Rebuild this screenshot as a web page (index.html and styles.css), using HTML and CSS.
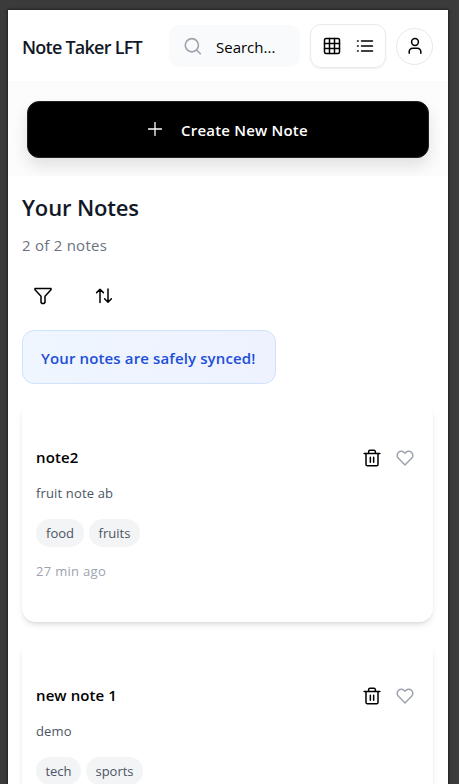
FILE: index.html
```html
<!DOCTYPE html>
<html lang="en">
<head>
<meta charset="utf-8">
<title>Note Taker LFT</title>
<link rel="stylesheet" href="styles.css">
</head>
<body>
<svg class="defs" aria-hidden="true">
  <symbol id="trash" viewBox="0 0 24 24"><path d="M1.5 6h21M4 6v14.5a1.8 1.8 0 0 0 1.8 1.8h12.4a1.8 1.8 0 0 0 1.8-1.8V6M7.5 6V3.6a1.8 1.8 0 0 1 1.8-1.8h5.4a1.8 1.8 0 0 1 1.8 1.8V6M9.8 11v6.5M14.2 11v6.5"/></symbol>
  <symbol id="heart" viewBox="0 0 24 24"><path d="M20.84 4.61a5.5 5.5 0 0 0-7.78 0L12 5.67l-1.06-1.06a5.5 5.5 0 0 0-7.78 7.78l1.06 1.06L12 21.23l7.78-7.78 1.06-1.06a5.5 5.5 0 0 0 0-7.78z"/></symbol>
</svg>
<div class="app">
  <header class="header">
    <h1 class="brand"><span>Note Taker LFT</span></h1>
    <div class="search">
      <svg class="icon" viewBox="0 0 24 24"><circle cx="10.5" cy="11" r="8.8"/><path d="M21.8 22.3l-5-5"/></svg>
      <span>Search...</span>
    </div>
    <div class="views">
      <svg class="icon" viewBox="0 0 18 18"><rect x="1.5" y="1.5" width="15" height="15" rx="1.5"/><path d="M6.5 1.5v15M11.5 1.5v15M1.5 6.5h15M1.5 11.5h15"/></svg>
      <svg class="icon" viewBox="0 0 18 18"><path d="M5.5 4h11M5.5 9h11M5.5 14h11M1.5 4h.7M1.5 9h.7M1.5 14h.7"/></svg>
    </div>
    <div class="avatar">
      <svg class="icon" viewBox="0 0 18 18"><circle cx="9" cy="5" r="3.4"/><path d="M3.2 16.3v-1.6a3.4 3.4 0 0 1 3.4-3.4h4.8a3.4 3.4 0 0 1 3.4 3.4v1.6"/></svg>
    </div>
  </header>
  <section class="create">
    <button class="create-button">
      <svg class="icon" viewBox="0 0 14 14"><path d="M7 .5v13M.5 7h13"/></svg>
      <span>Create New Note</span>
    </button>
  </section>
  <main class="main">
    <h2 class="title"><span>Your Notes</span></h2>
    <p class="count"><span>2 of 2 notes</span></p>
    <div class="tools">
      <svg class="icon" viewBox="0 0 18 18"><path d="M1 1.5h16v1.2l-6 6.5v6.2L9.8 16.6H8.2L7 15.4V9.2L1 2.7z"/></svg>
      <svg class="icon" viewBox="0 0 18 18"><path d="M5 15.5V2.3M1.6 5.6L5 2.2l3.4 3.4M13 2v13.2M9.6 11.8l3.4 3.4 3.4-3.4"/></svg>
    </div>
    <div class="synced"><span>Your notes are safely synced!</span></div>
    <article class="card">
      <div class="card-head">
        <h3>note2</h3>
        <svg class="icon"><use href="#trash"/></svg>
        <svg class="icon heart"><use href="#heart"/></svg>
      </div>
      <p class="text">fruit note ab</p>
      <div class="tags"><span class="tag food">food</span><span class="tag fruits">fruits</span></div>
      <p class="time">27 min ago</p>
    </article>
    <article class="card">
      <div class="card-head">
        <h3>new note 1</h3>
        <svg class="icon"><use href="#trash"/></svg>
        <svg class="icon heart"><use href="#heart"/></svg>
      </div>
      <p class="text">demo</p>
      <div class="tags"><span class="tag tech">tech</span><span class="tag sports">sports</span></div>
    </article>
  </main>
</div>
</body>
</html>
```
FILE: styles.css
```css
* { box-sizing: border-box; margin: 0; padding: 0; }
html, body { height: 784px; overflow: hidden; }
body {
  padding: 10px 11px 0 8px;
  background: #3b3b3b;
  font-family: "Open Sans", "Noto Sans", sans-serif;
  font-size: 15px;
  white-space: nowrap;
}
.defs { display: none; }
.app { height: 774px; overflow: hidden; background: #fff; box-shadow: 0 0 2px 1px #242424; }
.icon {
  display: block;
  flex: none;
  width: 18px;
  height: 18px;
  fill: none;
  stroke: #000;
  stroke-width: 1.5;
  stroke-linecap: round;
  stroke-linejoin: round;
}
.header { display: flex; align-items: center; height: 73px; padding: 0 15px 0 14px; border-bottom: 1px solid #f6f7f8; }
.brand { width: 148px; margin-right: -1px; font-size: 18px; font-weight: 600; line-height: 24px; color: #111827; letter-spacing: -0.76px; padding-top: 2px; }
.search { display: flex; align-items: center; gap: 14px; width: 131px; height: 42px; margin-right: 10px; padding-left: 15px; border-radius: 10px; background: #f9fafb; }
.search .icon { stroke: #9ca3af; stroke-width: 2.1; }
.search span { padding-top: 2px; }
.views { display: flex; align-items: center; gap: 15px; width: 76px; height: 44px; margin-right: 10px; padding-left: 12px; border: 1px solid #e8e9eb; border-radius: 11px; box-shadow: 0 1px 2px rgba(0,0,0,.07); }
.avatar { display: grid; place-items: center; width: 37px; height: 37px; border: 1px solid #e5e7eb; border-radius: 50%; }
.create { height: 93px; padding: 18px 19px 0 18.5px; background: #fcfcfc; }
.create-button {
  display: flex;
  align-items: center;
  width: 402px;
  height: 56.5px;
  padding-left: 120.5px;
  border: 1px solid #222;
  border-radius: 12px;
  background: #000;
  color: #fff;
  font: 600 15px "Open Sans", sans-serif;
  letter-spacing: 0.2px;
  box-shadow: 0 8px 16px rgba(0,0,0,.11);
}
.create-button .icon { width: 14px; height: 14px; margin-right: 19px; stroke: #fff; stroke-width: 1.3; }
.create-button span { padding-top: 1px; }
.main { padding: 14px 15px 0 14px; background: #fff; }
.title { font-size: 22px; font-weight: 600; line-height: 34px; color: #111827; letter-spacing: -0.15px; }
.count { margin-top: 9px; line-height: 24px; color: #6b7280; letter-spacing: 0.25px; }
.tools { display: flex; gap: 43px; height: 18px; margin: 30px 0 25px 12px; }
.synced {
  width: 254px;
  height: 54px;
  padding-left: 18px;
  border: 1px solid #cfe2fc;
  border-radius: 12px;
  background: linear-gradient(100deg, #eff6ff, #eef2ff);
  color: #1d4ed8;
  font-weight: 600;
  line-height: 54px;
  letter-spacing: 0.13px;
}
.card {
  height: 219.5px;
  margin-top: 18px;
  padding: 44px 19px 0 14px;
  border-radius: 14px;
  background: #fff;
  box-shadow: 0 4px 6px -1px rgba(0,0,0,.1), 0 2px 4px -2px rgba(0,0,0,.1);
}
.card + .card { margin-top: 18.5px; }
.card-head { display: flex; align-items: center; height: 24px; }
.card-head h3 { flex: 1; padding-bottom: 2px; font-size: 15px; font-weight: 600; line-height: 24px; letter-spacing: 0.1px; }
.card-head .icon { stroke-width: 2; }
.card-head .heart { margin-left: 15px; stroke: #9ca3af; }
.text { margin-top: 12px; font-size: 13px; line-height: 22px; color: #4b5563; letter-spacing: 0.15px; }
.tags { display: flex; gap: 5px; margin-top: 15px; }
.tag { width: 48px; height: 28px; border-radius: 14px; background: #f3f4f6; color: #4b5563; font-size: 13px; line-height: 29px; text-align: center; }
.fruits { width: 51px; }
.tech { width: 45px; }
.sports { width: 57px; }
.time { margin-top: 13px; font-size: 13px; line-height: 22px; color: #9ca3af; letter-spacing: 0.3px; }
```
